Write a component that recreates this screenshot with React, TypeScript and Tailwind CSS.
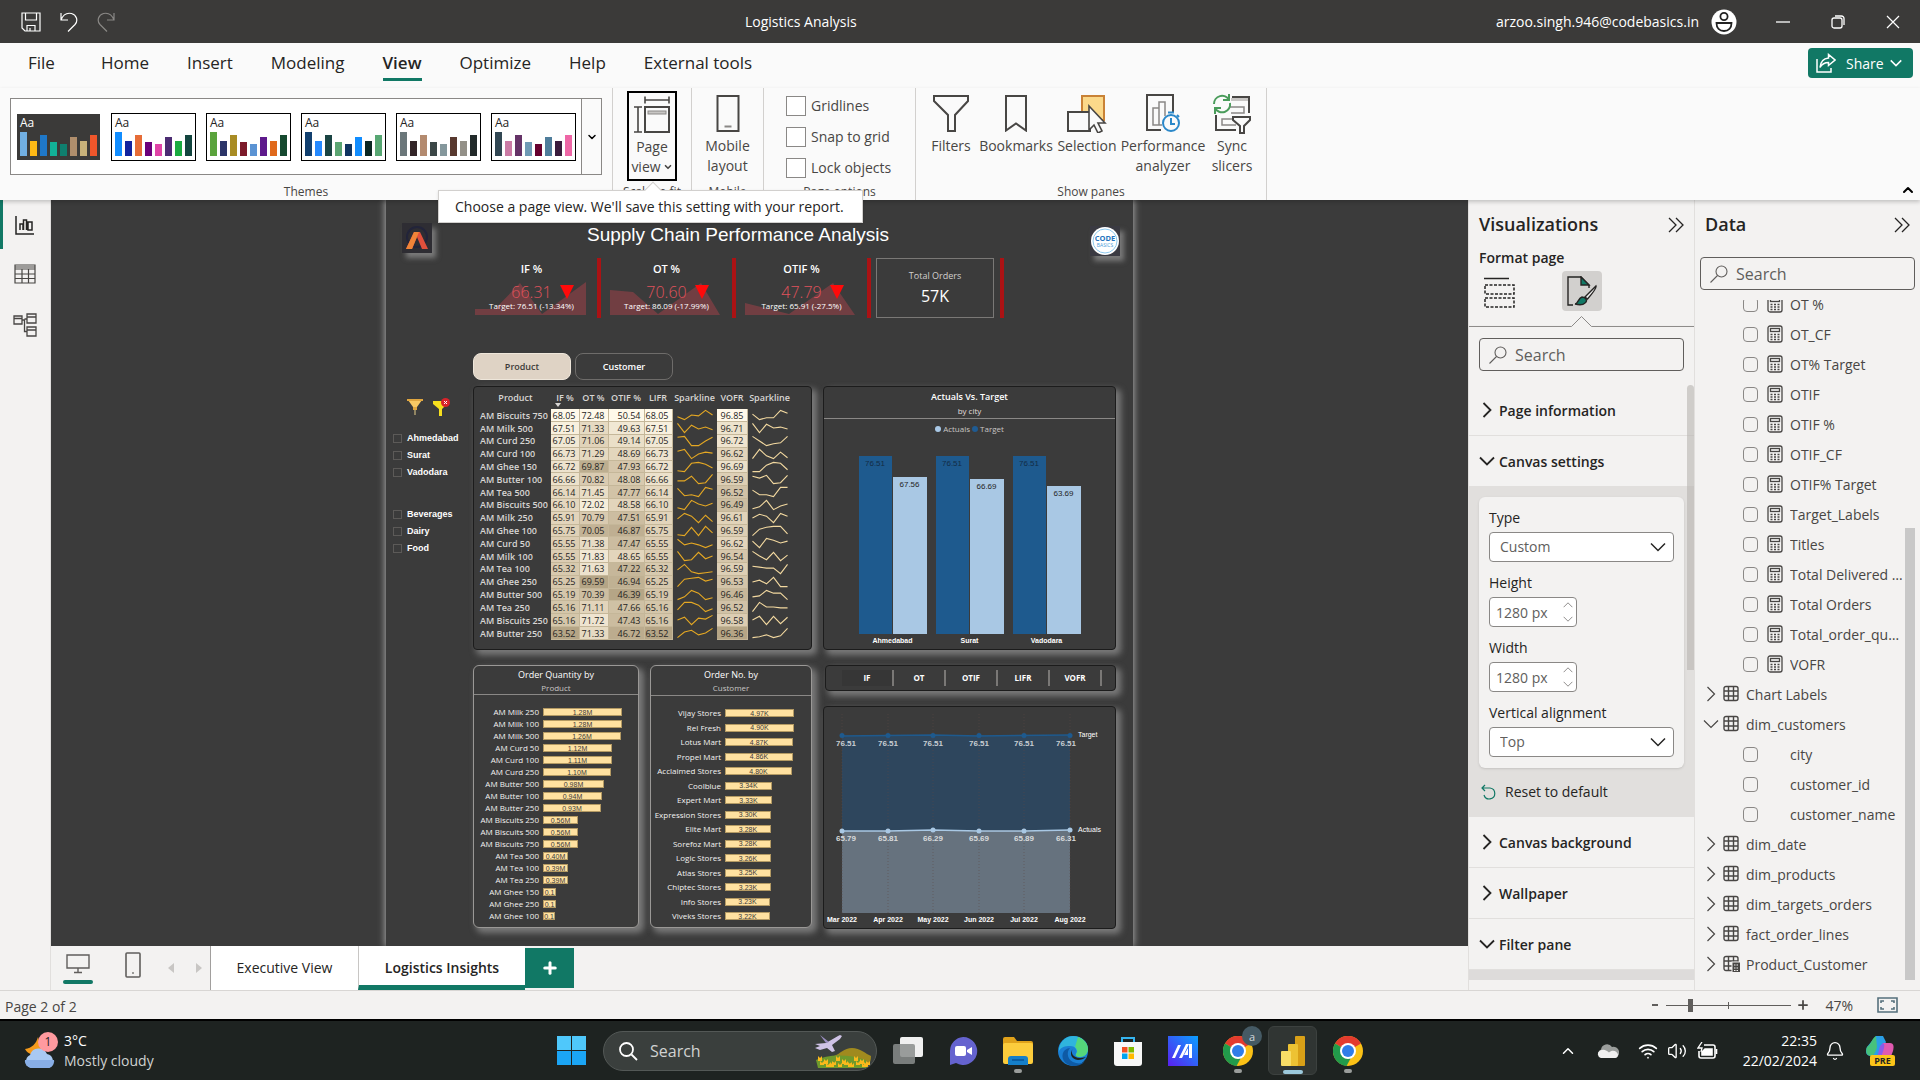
import React from "react";
import { ChevronDown, ChevronUp, Wifi, Volume2, Bell, Plus } from "lucide-react";

/* ---------- data ---------- */

const menuTabs = ["Home", "Insert", "Modeling", "View", "Optimize", "Help", "External tools"];

const themes: { dark?: boolean; colors: string[] }[] = [
  { dark: true, colors: ["#71afe2", "#ffb915", "#1f78c8", "#12b097", "#0f7f6f", "#b08e6c", "#c8b27a", "#f0562b"] },
  { colors: ["#118dff", "#12239e", "#e66c37", "#6b007b", "#e044a7", "#4b2c72", "#1aab40", "#13453f"] },
  { colors: ["#5aa33c", "#2b3468", "#a88c24", "#7c1a2a", "#5b93d3", "#5e1a8c", "#e0691c", "#15492f"] },
  { colors: ["#12406f", "#2489ff", "#1a4443", "#5aa572", "#0f3460", "#118dff", "#0a2622", "#57a773"] },
  { colors: ["#6b777a", "#332528", "#b38a6f", "#3c4747", "#84979c", "#58392f", "#939088", "#222a2a"] },
  { colors: ["#324753", "#cb7ba5", "#653367", "#6f9ab5", "#66002e", "#4f7d9b", "#3a1b3c", "#ee66a6"] },
];
const themeHeights = [24, 15, 21, 14, 12, 19, 15, 21];

type Row = [string, number, number, number, number, number, number[], number[]];
const products: Row[] = [
  ["AM Biscuits 750", 68.05, 72.48, 50.54, 68.05, 96.85, [3, 0, 5, 4, 10, 5], [6, 0, 2, 2, 10, 7]],
  ["AM Milk 500", 67.51, 71.33, 49.63, 67.51, 96.71, [10, 0, 8, 4, 6, 3], [10, 0, 9, 5, 6, 4]],
  ["AM Curd 250", 67.05, 71.06, 49.14, 67.05, 96.72, [9, 10, 0, 0, 5, 9], [10, 5, 0, 2, 3, 10]],
  ["AM Curd 100", 66.73, 71.29, 48.69, 66.73, 96.62, [8, 10, 0, 5, 7, 6], [0, 10, 3, 0, 7, 1]],
  ["AM Ghee 150", 66.72, 69.87, 47.93, 66.72, 96.69, [1, 0, 9, 10, 8, 4], [0, 0, 7, 10, 9, 2]],
  ["AM Butter 100", 66.66, 70.82, 48.08, 66.66, 96.59, [3, 3, 8, 0, 1, 10], [8, 6, 9, 0, 1, 9]],
  ["AM Tea 500", 66.14, 71.45, 47.77, 66.14, 96.52, [9, 1, 2, 0, 10, 8], [7, 2, 2, 0, 10, 10]],
  ["AM Biscuits 500", 66.1, 72.02, 48.58, 66.1, 96.49, [2, 0, 10, 6, 4, 7], [1, 3, 10, 0, 4, 6]],
  ["AM Milk 250", 65.91, 70.79, 47.51, 65.91, 96.61, [4, 10, 7, 0, 8, 1], [5, 9, 7, 0, 10, 7]],
  ["AM Ghee 100", 65.75, 70.05, 46.87, 65.75, 96.59, [1, 0, 9, 0, 10, 3], [0, 7, 9, 10, 10, 2]],
  ["AM Curd 50", 65.55, 71.38, 47.47, 65.55, 96.62, [9, 3, 5, 3, 0, 3], [7, 0, 10, 8, 5, 7]],
  ["AM Milk 100", 65.55, 71.83, 48.65, 65.55, 96.54, [10, 0, 1, 9, 2, 5], [10, 5, 1, 9, 0, 6]],
  ["AM Tea 100", 65.32, 71.63, 47.22, 65.32, 96.59, [4, 10, 2, 0, 1, 2], [8, 7, 6, 6, 0, 10]],
  ["AM Ghee 250", 65.25, 69.59, 46.94, 65.25, 96.53, [0, 8, 9, 10, 6, 8], [5, 7, 3, 10, 0, 0]],
  ["AM Butter 500", 65.19, 70.39, 46.39, 65.19, 96.46, [0, 3, 10, 7, 0, 2], [3, 4, 10, 7, 7, 0]],
  ["AM Tea 250", 65.16, 71.11, 47.66, 65.16, 96.52, [2, 10, 10, 7, 0, 3], [0, 10, 5, 5, 4, 4]],
  ["AM Biscuits 250", 65.16, 71.72, 47.43, 65.16, 96.58, [5, 8, 0, 7, 6, 10], [5, 9, 0, 9, 1, 8]],
  ["AM Butter 250", 63.52, 71.33, 46.72, 63.52, 96.36, [0, 6, 8, 3, 5, 10], [0, 1, 3, 0, 2, 10]],
];

const orderQty: [string, string, number][] = [
  ["AM Milk 250", "1.28M", 79],
  ["AM Milk 100", "1.28M", 79],
  ["AM Milk 500", "1.26M", 78],
  ["AM Curd 50", "1.12M", 69],
  ["AM Curd 100", "1.11M", 69],
  ["AM Curd 250", "1.10M", 68],
  ["AM Butter 500", "0.98M", 61],
  ["AM Butter 100", "0.94M", 59],
  ["AM Butter 250", "0.93M", 58],
  ["AM Biscuits 250", "0.56M", 35],
  ["AM Biscuits 500", "0.56M", 35],
  ["AM Biscuits 750", "0.56M", 35],
  ["AM Tea 500", "0.40M", 25],
  ["AM Tea 100", "0.39M", 25],
  ["AM Tea 250", "0.39M", 25],
  ["AM Ghee 150", "0.1", 13],
  ["AM Ghee 250", "0.1", 13],
  ["AM Ghee 100", "0.1", 12],
];

const orderNo: [string, string, number][] = [
  ["Vijay Stores", "4.97K", 69],
  ["Rel Fresh", "4.90K", 69],
  ["Lotus Mart", "4.87K", 68],
  ["Propel Mart", "4.86K", 68],
  ["Acclaimed Stores", "4.80K", 67],
  ["Coolblue", "3.34K", 47],
  ["Expert Mart", "3.33K", 47],
  ["Expression Stores", "3.30K", 46],
  ["Elite Mart", "3.28K", 46],
  ["Sorefoz Mart", "3.28K", 46],
  ["Logic Stores", "3.26K", 46],
  ["Atlas Stores", "3.25K", 46],
  ["Chiptec Stores", "3.23K", 46],
  ["Info Stores", "3.23K", 45],
  ["Viveks Stores", "3.22K", 45],
];

const measures = [
  "OT %",
  "OT_CF",
  "OT% Target",
  "OTIF",
  "OTIF %",
  "OTIF_CF",
  "OTIF% Target",
  "Target_Labels",
  "Titles",
  "Total Delivered Orders",
  "Total Orders",
  "Total_order_quantity",
  "VOFR",
];

/* ---------- helpers ---------- */

const mix = (a: number[], b: number[], t: number) =>
  `rgb(${a.map((v, i) => Math.round(v + (b[i] - v) * t)).join(",")})`;

function heat(v: number, min: number, max: number) {
  const low = [181, 165, 134];
  const mid = [224, 210, 184];
  const high = [255, 249, 234];
  const t = (v - min) / (max - min);
  return t < 0.5 ? mix(low, mid, t * 2) : mix(mid, high, (t - 0.5) * 2);
}

function Spark({ data, color }: { data: number[]; color: string }) {
  const pts = data.map((v, i) => `${1 + i * 7.6},${11.5 - v}`).join(" ");
  return (
    <svg viewBox="0 0 40 13" className="block h-3 w-10 overflow-visible">
      <polyline points={pts} fill="none" stroke={color} strokeWidth="1.2" />
    </svg>
  );
}

function Chevron({ dir, className, width = 1.5 }: { dir: "down" | "right" | "up"; className: string; width?: number }) {
  const d = { down: "M1 4.500l7 7 7-7", up: "M1 11.500l7-7 7 7", right: "M4.500 1l7 7-7 7" }[dir];
  return (
    <svg viewBox="0 0 16 16" className={`shrink-0 ${className}`} fill="none" stroke="currentColor" strokeWidth={width}>
      <path d={d} />
    </svg>
  );
}

/* ---------- ribbon ---------- */

function TitleBar() {
  return (
    <header className="flex h-[43px] shrink-0 items-center bg-[#3b3a39] text-white">
      <div className="flex w-1/3 items-center gap-[19px] pl-[21px]">
        <button aria-label="Save">
          <svg viewBox="0 0 20 20" className="size-5" fill="none" stroke="#fff" strokeWidth="1.2">
            <path d="M1 1h18v18H4l-3-3zM4.500 1v7h11V1M6 19v-5.500h8V19M9 16v3" />
          </svg>
        </button>
        <button aria-label="Undo">
          <svg viewBox="0 0 18 20" className="h-5 w-[18px]" fill="none" stroke="#fff" strokeWidth="1.2">
            <path d="M1 1v7h7M1 8c2-5 6-7.500 10.500-6.500 5 1.500 7 7 3.500 11L8 19.500" />
          </svg>
        </button>
        <button aria-label="Redo">
          <svg viewBox="0 0 18 20" className="h-5 w-[18px]" fill="none" stroke="#8a8886" strokeWidth="1.2">
            <path d="M17 1v7h-7M17 8c-2-5-6-7.500-10.500-6.500-5 1.500-7 7-3.500 11l7 7" />
          </svg>
        </button>
      </div>
      <div className="flex-1 pl-[105px] text-[14px]">Logistics Analysis</div>
      <div className="flex items-center text-[14px]">
        <span>arzoo.singh.946@codebasics.in</span>
        <svg viewBox="0 0 26 26" className="ml-3 size-[26px]">
          <circle cx="13" cy="13" r="12.500" fill="#fff" />
          <circle cx="13" cy="7.500" r="3.600" fill="none" stroke="#222" strokeWidth="1.800" />
          <path d="M5.500 14h15c0 5-3 8-7.500 8s-7.500-3-7.500-8z" fill="none" stroke="#222" strokeWidth="1.800" />
        </svg>
        <button aria-label="Minimize" className="flex h-10 w-[75px] items-center justify-center pl-4">
          <svg viewBox="0 0 14 14" className="size-3.5" stroke="#fff" strokeWidth="1.300"><path d="M0 7h14" /></svg>
        </button>
        <button aria-label="Restore" className="flex h-10 w-[51px] items-center justify-center">
          <svg viewBox="0 0 14 14" className="size-3.5" fill="none" stroke="#fff" strokeWidth="1.300">
            <rect x="1" y="3" width="10" height="10" rx="2" />
            <path d="M4 1h6.500a2.500 2.500 0 0 1 2.500 2.500V10" />
          </svg>
        </button>
        <button aria-label="Close" className="mr-5 flex h-10 w-[37px] items-center justify-end">
          <svg viewBox="0 0 14 14" className="size-3.5" stroke="#fff" strokeWidth="1.200"><path d="M1 1l12 12M13 1L1 13" /></svg>
        </button>
      </div>
    </header>
  );
}

function MenuBar() {
  return (
    <nav className="flex h-[45px] shrink-0 items-start bg-[#fafafa] pr-[7px] text-[17px] text-[#252423]">
      <button className="mt-[5px] ml-7 h-[30px]">File</button>
      <div className="ml-[46px] flex gap-[38px]">
        {menuTabs.map((t) => (
          <button
            key={t}
            className={
              t === "View"
                ? "mt-[5px] h-[33px] border-b-3 border-[#117865] leading-[30px] font-semibold"
                : "mt-[5px] h-[33px] border-b-3 border-transparent leading-[30px]"
            }
          >
            {t}
          </button>
        ))}
      </div>
      <button className="mt-[5px] ml-auto flex h-[30px] w-[105px] items-center rounded bg-[#117865] pl-2 text-[14px] text-white">
        <svg viewBox="0 0 20 20" className="mr-2.5 size-5" fill="none" stroke="#fff" strokeWidth="1.500">
          <path d="M1 6v13h14v-4" />
          <path d="M12.500 5V1.500L19 7l-6.500 5.500V9.500C9 9.500 6 11 4 14.500 4.500 9 7.500 5.500 12.500 5z" />
        </svg>
        Share
        <Chevron dir="down" className="ml-1.5 size-3" width={2} />
      </button>
    </nav>
  );
}

function Group({ label, className, children }: { label: string; className: string; children: React.ReactNode }) {
  return (
    <section className={`relative flex flex-col border-r border-[#d2d0ce] ${className}`}>
      <div className="flex h-[92px]">{children}</div>
      <h2 className="mt-[3px] text-center text-[12px] leading-[17px] text-[#484644]">{label}</h2>
    </section>
  );
}

function RibbonButton({ icon, lines, className }: { icon: React.ReactNode; lines: string[]; className: string }) {
  return (
    <button className={`flex flex-col items-center pt-[7px] text-[14px] leading-[20px] text-[#484644] ${className}`}>
      <span className="mb-1 flex h-[37px] items-center">{icon}</span>
      {lines.map((l) => (
        <span key={l} className="whitespace-nowrap">{l}</span>
      ))}
    </button>
  );
}

function Ribbon() {
  const ic = { fill: "none", stroke: "#484644", strokeWidth: 2 };
  return (
    <div className="relative z-20 flex h-28 shrink-0 bg-[#fafafa] shadow-[0_2px_4px_rgba(0,0,0,0.2)]">
      <Group label="Themes" className="w-[613px]">
        <div className="mt-2.5 ml-2.5 flex h-[77px] w-[592px] border border-[#8a8886] bg-white">
          <div className="flex flex-1 items-center gap-2.5 pl-[5px]">
            {themes.map((t, i) => (
              <button
                key={i}
                aria-label={`Theme ${i + 1}`}
                className={
                  t.dark
                    ? "flex h-[48px] w-[85px] flex-col items-start border border-white bg-[#3b3a39] px-[3px] text-white"
                    : "flex h-[48px] w-[85px] flex-col items-start border border-black bg-white px-[3px] text-[#252423]"
                }
              >
                <span className="h-[18px] text-[12px] leading-[18px]">Aa</span>
                <span className="flex h-[24px] w-full items-end gap-[3px]">
                  {t.colors.map((c, j) => (
                    <span key={j} className="w-[7px]" style={{ background: c, height: themeHeights[j] }} />
                  ))}
                </span>
              </button>
            ))}
          </div>
          <button aria-label="More themes" className="flex w-5 items-center justify-center border-l border-[#8a8886] bg-[#fafafa]">
            <ChevronDown className="size-3" strokeWidth={3} />
          </button>
        </div>
      </Group>
      <Group label="Scale to fit" className="w-[79px]">
        <button className="mt-[3px] ml-[14px] flex h-[90px] w-[50px] flex-col items-center border-2 border-black pt-0.5 text-[14px] leading-[20px] text-[#484644]">
          <svg viewBox="0 0 36 38" className="mb-1 h-[38px] w-9" {...ic}>
            <rect x="11" y="12" width="24" height="25" />
            <rect x="14" y="16" width="18" height="3" fill="#c8c6c4" stroke="#8a8886" strokeWidth="1" />
            <path d="M11 1.500v7M35 1.500v7M11 5h24M0 12h8M0 37h8M4 12v25" strokeWidth="1.600" />
          </svg>
          <span>Page</span>
          <span className="flex items-center gap-0.5">view<ChevronDown className="size-2.5" strokeWidth={4} /></span>
        </button>
      </Group>
      <Group label="Mobile" className="w-[72px]">
        <RibbonButton
          className="w-full"
          lines={["Mobile", "layout"]}
          icon={
            <svg viewBox="0 0 24 37" className="h-[37px] w-6" {...ic}>
              <rect x="1.500" y="1" width="21" height="35" />
              <path d="M8.500 31.500h7" stroke="#8a8886" />
            </svg>
          }
        />
      </Group>
      <Group label="Page options" className="w-[152px]">
        <div className="flex flex-col gap-[10px] pt-[7px] pl-[22px]">
          {["Gridlines", "Snap to grid", "Lock objects"].map((l) => (
            <label key={l} className="flex h-[21px] items-center gap-[5px] text-[14px] text-[#484644]">
              <input type="checkbox" className="h-5 w-5 appearance-none border border-[#8a8886] bg-white" />
              {l}
            </label>
          ))}
        </div>
      </Group>
      <Group label="Show panes" className="w-[351px]">
        <RibbonButton
          className="ml-1.5 w-[58px]"
          lines={["Filters"]}
          icon={
            <svg viewBox="0 0 36 37" className="h-[37px] w-9" {...ic}>
              <path d="M1 1h34v5L22 20v16h-7V20L1 6z" />
            </svg>
          }
        />
        <RibbonButton
          className="w-[72px]"
          lines={["Bookmarks"]}
          icon={
            <svg viewBox="0 0 22 37" className="h-[37px] w-[22px]" {...ic}>
              <path d="M1 1h20v34.500l-10-7-10 7z" />
            </svg>
          }
        />
        <RibbonButton
          className="w-[70px]"
          lines={["Selection"]}
          icon={
            <svg viewBox="0 0 40 38" className="h-[38px] w-10" {...ic}>
              <rect x="15" y="1" width="22" height="24" fill="#fbd98a" stroke="#c98236" />
              <rect x="1" y="17" width="22" height="19" fill="#fafafa" />
              <path d="M22 11v24l5-5 4 8 4-2-4-8h7z" fill="#fafafa" strokeWidth="1.600" />
            </svg>
          }
        />
        <RibbonButton
          className="w-[82px]"
          lines={["Performance", "analyzer"]}
          icon={
            <svg viewBox="0 0 36 39" className="h-[39px] w-9" {...ic}>
              <path d="M16 36H2V1h26v17" />
              <path d="M8 14h6v17H8zM14 14V8h6v14M14 31h3" stroke="#8a8886" strokeWidth="1.500" />
              <circle cx="26" cy="29" r="8" fill="#fafafa" stroke="#2b88c9" />
              <path d="M26 24v6h4M23 18.500h6M32 21l2 2" stroke="#2b88c9" />
            </svg>
          }
        />
        <RibbonButton
          className="w-[56px]"
          lines={["Sync", "slicers"]}
          icon={
            <svg viewBox="0 0 40 40" className="size-10" {...ic}>
              <path d="M20 3h17v16M4 21v15h20" />
              <path d="M19 5.500h17" stroke="#c8c6c4" strokeWidth="3" />
              <path d="M18 13h14v6H19M24 31H10v-6h10" stroke="#8a8886" strokeWidth="1.500" />
              <path d="M2 10a8 8 0 0 1 15-4M18 9a8 8 0 0 1-15 5M17 0v6h-6M3 20v-6h6" stroke="#4a9c5b" />
              <path d="M21 23h17v3l-6 6v7h-4v-7l-7-6z" fill="#fafafa" />
            </svg>
          }
        />
      </Group>
      <button aria-label="Collapse ribbon" className="mt-auto mr-1 mb-0.5 ml-auto">
        <ChevronUp className="size-4" strokeWidth={3} />
      </button>
      <div role="tooltip" className="absolute top-[102px] left-[438px] border border-[#d2d0ce] bg-white pt-[5px] pr-[18px] pb-1 pl-4 text-[14px] leading-[22px] whitespace-nowrap text-[#252423] shadow">
        <span className="absolute -top-[7px] left-[208px] size-3 rotate-45 border-t border-l border-[#d2d0ce] bg-white" />
        Choose a page view. We'll save this setting with your report.
      </div>
    </div>
  );
}

/* ---------- report ---------- */

const panelGlow = "shadow-[4px_4px_6px_1px_#7a7a7a]";

function Kpi({ name, value, target, area }: { name: string; value: string; target: string; area: string }) {
  return (
    <>
      <div className="relative flex w-[131px] flex-col items-center text-white">
        <svg viewBox="0 0 111 33" className="absolute bottom-[3px] left-[9px] h-[33px] w-[111px]">
          <polygon points={area} fill="#d64550" fillOpacity="0.35" />
        </svg>
        <h3 className="relative pt-[2px] text-[11px] leading-[18px] font-semibold">{name}</h3>
        <div className="relative flex items-center text-[16px] leading-[28px] font-light text-[#e0525c]">
          <span className="w-[14px]" />
          <span className="px-2">{value}</span>
          <svg viewBox="0 0 14 14" className="size-[14px]"><path d="M0 0h14L7 14z" fill="#ff0a0a" /></svg>
        </div>
        <p className="relative -mt-1.5 text-[8px] leading-[12px] whitespace-nowrap">{target}</p>
      </div>
      <span className="w-1 bg-[#ab1214]" />
    </>
  );
}

function ProductTable() {
  const col = (i: number) => products.map((p) => p[i] as number);
  const range = [1, 2, 3, 4, 5].map((i) => [Math.min(...col(i)), Math.max(...col(i))]);
  const cell = (p: Row, i: number) => (
    <td
      className="border-r border-b border-[#c5b799] pr-[3px] text-right text-[9px] leading-[11px] text-[#252423]"
      style={{ background: heat(p[i] as number, range[i - 1][0], range[i - 1][1]) }}
    >
      {(p[i] as number).toFixed(2)}
    </td>
  );
  return (
    <section className={`h-[264px] rounded border border-[#1c1c1c] bg-[#3b3b3b] pt-1 pl-1.5 ${panelGlow}`}>
      <table className="h-[249px] w-[312px] table-fixed border-collapse text-[#d8d6d4]">
        <colgroup>
          <col className="w-[71px]" />
          <col className="w-[28px]" />
          <col className="w-[29px]" />
          <col className="w-[36px]" />
          <col className="w-[28px]" />
          <col className="w-[45px]" />
          <col className="w-[30px]" />
          <col className="w-[45px]" />
        </colgroup>
        <thead>
          <tr className="h-[18px] text-[9px] whitespace-nowrap">
            {["Product", "IF %", "OT %", "OTIF %", "LIFR", "Sparkline", "VOFR", "Sparkline"].map((h, i) => (
              <th key={i} className="relative p-0 text-center align-top leading-[13px] font-semibold">
                {h}
                {i === 1 && (
                  <svg viewBox="0 0 6 4" className="absolute bottom-0.5 left-1 h-1 w-1.5"><path d="M0 0h6L3 4z" fill="#d8d6d4" /></svg>
                )}
              </th>
            ))}
          </tr>
        </thead>
        <tbody>
          {products.map((p) => (
            <tr key={p[0]}>
              <td className="p-0 text-[9px] leading-[11px] font-semibold whitespace-nowrap">{p[0]}</td>
              {cell(p, 1)}
              {cell(p, 2)}
              {cell(p, 3)}
              {cell(p, 4)}
              <td className="p-0 pl-0.5"><Spark data={p[6]} color="#e5a823" /></td>
              {cell(p, 5)}
              <td className="p-0 pl-0.5"><Spark data={p[7]} color="#f3d9a0" /></td>
            </tr>
          ))}
        </tbody>
      </table>
    </section>
  );
}

function ColumnChart() {
  const cities: [string, number, number][] = [
    ["Ahmedabad", 67.56, 157],
    ["Surat", 66.69, 155],
    ["Vadodara", 63.69, 148],
  ];
  return (
    <section className={`flex h-[264px] flex-col rounded border border-[#1c1c1c] bg-[#3b3b3b] text-center ${panelGlow}`}>
      <h3 className="pt-[2px] text-[9px] leading-[15px] font-semibold text-white">Actuals Vs. Target</h3>
      <p className="h-[15px] border-b border-[#8a8886] text-[8px] leading-[13px] text-[#e1dfdd]">by city</p>
      <div className="flex items-center justify-center gap-0.5 pt-[3px] text-[8px] leading-[14px] text-[#c8c6c4]">
        <span className="size-1.5 rounded-full bg-[#a9c8e6]" />Actuals
        <span className="size-1.5 rounded-full bg-[#1f5b92]" />Target
      </div>
      <div className="mt-auto flex justify-center gap-[9px] pb-0.5">
        {cities.map(([c, v, h]) => (
          <div key={c}>
            <div className="flex items-end gap-px font-['Liberation_Sans',sans-serif] text-[8px] leading-[15px]">
              <div className="h-[178px] w-[33px] bg-[#1e5a8e] text-[#132c45]">76.51</div>
              <div className="w-[34px] bg-[#a9c8e4] text-[#252423]" style={{ height: h }}>{v}</div>
            </div>
            <div className="font-['Liberation_Sans',sans-serif] text-[7px] leading-[13px] font-bold text-white">{c}</div>
          </div>
        ))}
      </div>
    </section>
  );
}

function BarPanel({
  title,
  sub,
  rows,
  labelClass,
  className,
}: {
  title: string;
  sub: string;
  rows: [string, string, number][];
  labelClass: string;
  className: string;
}) {
  return (
    <section className={`flex h-[263px] flex-col rounded-md border border-[#9a9896] bg-[#3b3b3b] ${panelGlow} ${className}`}>
      <h3 className="pt-[2px] text-center text-[9px] leading-[14px] font-medium text-white">{title}</h3>
      <p className="h-[14px] border-b border-[#8a8886] text-center text-[8px] leading-[11px] text-[#c8c6c4]">{sub}</p>
      <ul className="mt-[11px] mb-[5px] flex flex-1 flex-col justify-between">
        {rows.map(([n, v, w], i) => (
          <li key={i} className="flex h-3 items-center gap-1 text-[8px] leading-[10px] text-[#f3f2f1]">
            <span className={`shrink-0 text-right whitespace-nowrap ${labelClass}`}>{n}</span>
            <span
              className="flex h-2 items-center justify-center border border-[#b49a63] bg-[#ffe1a0] font-['Liberation_Sans',sans-serif] text-[7px] leading-[7px] text-[#3b3a39]"
              style={{ width: w }}
            >
              {v}
            </span>
          </li>
        ))}
      </ul>
    </section>
  );
}

function TrendChart() {
  const xs = [18, 64, 109, 155, 200, 246];
  const months = ["Mar 2022", "Apr 2022", "May 2022", "Jun 2022", "Jul 2022", "Aug 2022"];
  const actual = ["65.79", "65.81", "66.29", "65.69", "65.89", "66.31"];
  const ys = [124, 124, 123, 124, 124, 123];
  return (
    <section className={`h-[223px] rounded border border-[#1c1c1c] bg-[#3b3b3b] ${panelGlow}`}>
      <svg viewBox="0 0 291 221" className="block w-full font-['Liberation_Sans',sans-serif]">
        <polygon points="18,29 246,28 246,123 18,124" fill="#2e465d" />
        <polygon points="18,124 64,124 109,123 155,124 200,124 246,123 246,206 18,206" fill="#66727e" />
        {xs.map((x) => (
          <path key={x} d={`M${x} 7v199`} stroke="#5c4a46" strokeWidth="0.500" strokeDasharray="1 2" />
        ))}
        <path d="M18 29L109 28L155 29L246 28" stroke="#1e5a8e" strokeWidth="1.500" fill="none" />
        <polyline points={xs.map((x, i) => `${x},${ys[i]}`).join(" ")} stroke="#a9c8e4" strokeWidth="1.500" fill="none" />
        {xs.map((x, i) => (
          <g key={x} textAnchor="middle">
            <circle cx={x} cy={28.5} r="2.500" fill="#1e5a8e" />
            <circle cx={x} cy={ys[i]} r="2.500" fill="#a9c8e4" />
            <text x={i === 0 ? x + 4 : i === 5 ? x - 4 : x} y="39" fontSize="8" fontWeight="700" fill="#c8cdd2">76.51</text>
            <text x={i === 0 ? x + 4 : i === 5 ? x - 4 : x} y="134" fontSize="8" fontWeight="700" fill="#d8dadc">{actual[i]}</text>
            <text x={x} y="215" fontSize="7" fontWeight="700" fill="#fff">{months[i]}</text>
          </g>
        ))}
        <text x="254" y="30" fontSize="7" fill="#fff">Target</text>
        <text x="254" y="125" fontSize="7" fill="#fff">Actuals</text>
      </svg>
    </section>
  );
}

function Slicer({ items, className }: { items: string[]; className: string }) {
  return (
    <div className={`flex flex-col ${className}`}>
      {items.map((i) => (
        <label key={i} className="flex h-[17px] items-center gap-[5px] font-['Liberation_Sans',sans-serif] text-[9px] font-bold text-white">
          <input type="checkbox" className="size-[9px] appearance-none border border-[#5c5a58]" />
          {i}
        </label>
      ))}
    </div>
  );
}

function Report() {
  return (
    <main className="flex min-h-0 flex-1 justify-center overflow-hidden bg-[#3b3b3b]">
      <article className="h-full w-[747px] shrink-0 bg-[#3b3b3b] shadow-[0_0_7px_1px_#a5a5a5]">
        <div className="flex h-[58px] items-start justify-between px-4">
          <svg viewBox="0 0 30 30" className="mt-[23px] size-[30px] shadow-[4px_5px_5px_#7a7a7a]">
            <rect width="30" height="30" fill="#2e2d33" />
            <circle cx="15" cy="14" r="10" fill="none" stroke="#22243a" strokeWidth="2" />
            <path d="M4 26L12 9h6l8 17h-6l-5-12-5 12z" fill="#e0503c" />
            <path d="M4 26L12 9h5L10 26z" fill="#f08438" />
          </svg>
          <h1 className="mt-[21px] ml-[-46px] font-['Liberation_Sans',sans-serif] text-[19px] leading-7 text-white">Supply Chain Performance Analysis</h1>
          <svg viewBox="0 0 30 30" className="mt-[26px] -mr-[3px] size-[30px] shadow-[4px_5px_5px_#7a7a7a]">
            <rect width="30" height="30" fill="#3a3a42" />
            <circle cx="15" cy="15" r="14" fill="#fff" />
            <circle cx="15" cy="15" r="12" fill="none" stroke="#8ec9ee" strokeWidth="1" />
            <text x="15" y="15" textAnchor="middle" fontSize="7.500" fontWeight="700" fill="#2474c0" fontFamily="Open Sans">CODE</text>
            <text x="15" y="21" textAnchor="middle" fontSize="5" fill="#4a9bd8" fontFamily="Open Sans">BASICS</text>
          </svg>
        </div>

        <div className="flex h-[60px] pl-20">
          <Kpi name="IF %" value="66.31" target="Target: 76.51 (-13.34%)" area="0,27 20,27 45,1 67,32 111,0 111,33 0,33" />
          <Kpi name="OT %" value="70.60" target="Target: 86.09 (-17.99%)" area="0,8 23,10 48,32 91,1 110,33 0,33" />
          <Kpi name="OTIF %" value="47.79" target="Target: 65.91 (-27.5%)" area="0,21 44,32 88,1 110,33 0,33" />
          <div className="ml-[5px] w-[118px] border border-[#7a7876] pt-[9px] text-center text-white">
            <p className="text-[9px] leading-[16px] text-[#d2d0ce]">Total Orders</p>
            <p className="text-[16px] leading-6 font-medium">57K</p>
          </div>
          <span className="ml-[6px] w-1 bg-[#ab1214]" />
        </div>

        <div className="flex gap-1 pt-[35px] pl-[87px] text-[9px] font-semibold">
          <button className="h-[27px] w-[98px] rounded-lg border border-[#eee6da] bg-[#dfd3c5] text-[#3b3a39]">Product</button>
          <button className="h-[27px] w-[98px] rounded-lg border border-[#6e6c6a] text-white">Customer</button>
        </div>

        <div className="flex pt-[6px] pr-[17px]">
          <aside className="w-[87px] shrink-0 pl-[7px]">
            <div className="flex gap-2.5 pt-3 pl-[14px]">
              <svg viewBox="0 0 16 18" className="h-[18px] w-4">
                <path d="M1 2h14l-5 7H6z" fill="#f9c964" />
                <path d="M0 1h16v2H0zM6 9h4v3H6z" fill="#e0a640" />
                <path d="M8 12v5" stroke="#e8d08a" />
              </svg>
              <svg viewBox="0 0 18 18" className="size-[18px]">
                <path d="M0 3h14v3l-5 5v7H6v-7L0 6z" fill="#f6df1e" />
                <circle cx="12.500" cy="4.500" r="4.500" fill="#d8232a" />
                <path d="M11 3l3 3M14 3l-3 3" stroke="#fff" />
              </svg>
            </div>
            <Slicer items={["Ahmedabad", "Surat", "Vadodara"]} className="pt-[14px]" />
            <Slicer items={["Beverages", "Dairy", "Food"]} className="pt-[25px]" />
          </aside>
          <div className="flex w-[339px] flex-col gap-[15px]">
            <ProductTable />
            <div className="flex gap-[11px]">
              <BarPanel title="Order Quantity by" sub="Product" rows={orderQty} labelClass="w-[65px]" className="w-[166px]" />
              <BarPanel title="Order No. by" sub="Customer" rows={orderNo} labelClass="w-[70px]" className="w-[162px]" />
            </div>
          </div>
          <div className="ml-[11px] flex flex-1 flex-col gap-[15px]">
            <ColumnChart />
            <div className={`ml-0.5 flex h-[26px] items-center rounded border border-[#1c1c1c] bg-[#3b3b3b] pl-4 text-[8px] font-bold text-white ${panelGlow}`}>
              {["IF", "OT", "OTIF", "LIFR", "VOFR"].map((t) => (
                <button key={t} className={t === "IF" ? "h-4 w-[52px] border-r-2 border-[#7a7876] bg-[#363636]" : "h-4 w-[52px] border-r-2 border-[#7a7876]"}>
                  {t}
                </button>
              ))}
            </div>
            <TrendChart />
          </div>
        </div>
      </article>
    </main>
  );
}

function LeftRail() {
  const s = { fill: "none", stroke: "#484644", strokeWidth: 1.5 };
  return (
    <nav className="flex w-[51px] shrink-0 flex-col border-r border-[#e1dfdd] bg-[#f3f2f1]">
      <button aria-label="Report view" className="flex h-[49px] items-center justify-center border-l-3 border-[#117865] pr-[3px]">
        <svg viewBox="0 0 20 20" className="size-5" {...s} stroke="#252423">
          <path d="M1 1v18h18M5 15V9h3v6M8.500 15V5h3v10M13 15V7h4v8z" />
        </svg>
      </button>
      <button aria-label="Table view" className="flex h-[50px] items-center justify-center">
        <svg viewBox="0 0 22 20" className="h-5 w-[22px]" {...s} strokeWidth="1.200">
          <path d="M1 1h20v18H1zM1 5h20M1 10h20M1 14.500h20M8 5v14M14.500 5v14M1 3h20" />
        </svg>
      </button>
      <button aria-label="Model view" className="flex h-[51px] items-center justify-center">
        <svg viewBox="0 0 24 24" className="size-6" {...s} strokeWidth="1.300">
          <path d="M1 3h8v8H1zM1 5.500h8M14 1h9v9h-9zM14 4h9M14 14h9v9h-9zM14 17h9M9 7h2.500v11.500H14M11.500 6H14" />
        </svg>
      </button>
    </nav>
  );
}

function PageTabs() {
  return (
    <div className="flex h-11 shrink-0 bg-[#f3f2f1] text-[14px] text-[#252423]">
      <button aria-label="Desktop layout" className="ml-3 flex w-[30px] flex-col items-center pt-2">
        <svg viewBox="0 0 24 20" className="h-5 w-6" fill="none" stroke="#605e5c" strokeWidth="1.400">
          <path d="M1 1h22v13H1zM12 14v4M8 18.500h8" />
        </svg>
        <span className="mt-1.5 h-1 w-full rounded-sm bg-[#117865]" />
      </button>
      <button aria-label="Mobile layout" className="ml-8 self-start pt-1.5">
        <svg viewBox="0 0 16 26" className="h-[26px] w-4" fill="none" stroke="#605e5c" strokeWidth="1.600">
          <rect x="1" y="1" width="14" height="24" rx="1" />
          <path d="M7.200 21h1.600" />
        </svg>
      </button>
      <div className="ml-[27px] flex items-center gap-[22px]">
        <button aria-label="Previous page"><svg viewBox="0 0 6 10" className="h-2.5 w-1.5"><path d="M6 0v10L0 5z" fill="#c8c6c4" /></svg></button>
        <button aria-label="Next page"><svg viewBox="0 0 6 10" className="h-2.5 w-1.5"><path d="M0 0v10l6-5z" fill="#c8c6c4" /></svg></button>
      </div>
      <button className="ml-2 w-[148px] border-l border-[#a19f9d] bg-white pb-0.5">Executive View</button>
      <button className="w-[167px] border-b-5 border-l border-b-[#117865] border-l-[#c8c6c4] bg-white pt-[3px] font-semibold">Logistics Insights</button>
      <button aria-label="New page" className="mt-0.5 flex h-10 w-[49px] items-center justify-center bg-[#117865] text-white">
        <Plus className="size-[18px]" strokeWidth={4} />
      </button>
    </div>
  );
}

/* ---------- side panes ---------- */

function SearchIcon() {
  return (
    <svg viewBox="0 0 18 18" className="size-[18px] shrink-0" fill="none" stroke="#605e5c" strokeWidth="1.100">
      <circle cx="11.500" cy="6.500" r="5.500" />
      <path d="M7.500 10.500L0.500 17.500" />
    </svg>
  );
}

function SearchBox({ label, className }: { label: string; className: string }) {
  return (
    <label className={`flex h-[33px] items-center gap-2 rounded-sm border border-[#605e5c] px-[9px] ${className}`}>
      <SearchIcon />
      <input aria-label={label} placeholder="Search" className="w-full min-w-0 bg-transparent text-[16px] outline-none placeholder:text-[#605e5c]" />
    </label>
  );
}

function PaneHeader({ title }: { title: string }) {
  return (
    <div className="flex h-12 shrink-0 items-center justify-between pt-px pr-2.5 pl-2.5">
      <h2 className="text-[18px] font-semibold text-[#252423]">{title}</h2>
      <button aria-label={`Collapse ${title}`}>
        <svg viewBox="0 0 16 16" className="size-4" fill="none" stroke="#252423" strokeWidth="1.300">
          <path d="M1 1l7 7-7 7M8 1l7 7-7 7" />
        </svg>
      </button>
    </div>
  );
}

function Section({ title, open }: { title: string; open?: boolean }) {
  return (
    <button className="flex h-[51px] w-full shrink-0 items-center gap-1 border-b border-[#e1dfdd] bg-[#f3f2f1] pl-2.5 text-[14px] font-semibold text-[#252423]">
      <Chevron dir={open ? "down" : "right"} className="size-4" width={1.8} />
      {title}
    </button>
  );
}

function SelectField({ label, value }: { label: string; value: string }) {
  return (
    <label className="relative mb-2.5 block text-[14px] leading-[21px] text-[#252423]">
      {label}
      <select defaultValue={value} className="mt-1 block h-[30px] w-full appearance-none rounded-sm border border-[#8a8886] bg-white px-2.5 leading-[20px] text-[#605e5c]">
        <option>{value}</option>
      </select>
      <Chevron dir="down" className="pointer-events-none absolute right-2 bottom-[7px] size-4" />
    </label>
  );
}

function NumberField({ label }: { label: string }) {
  return (
    <label className="mb-2.5 block text-[14px] leading-[21px] text-[#252423]">
      {label}
      <span className="mt-1 flex h-[30px] w-[88px] items-center rounded-sm border border-[#8a8886] bg-white pl-1.5">
        <input defaultValue="1280 px" className="w-[67px] text-[#605e5c] outline-none" />
        <span className="flex flex-col gap-1 pr-[3px] text-[#8a8886]">
          <Chevron dir="up" className="size-2.5" />
          <Chevron dir="down" className="size-2.5" />
        </span>
      </span>
    </label>
  );
}

function VisualizationsPane() {
  return (
    <aside className="flex w-[227px] shrink-0 flex-col overflow-hidden border-r border-l border-[#e1dfdd] bg-[#f3f2f1]">
      <PaneHeader title="Visualizations" />
      <h3 className="pl-2.5 text-[14px] leading-[20px] font-semibold text-[#252423]">Format page</h3>
      <div className="flex pt-[3px] pl-[15px]">
        <button aria-label="Build visual" className="mt-1 h-9 w-[31px]">
          <svg viewBox="0 0 31 32" className="h-8 w-[31px]" fill="none" stroke="#252423" strokeWidth="1.500">
            <path d="M0 1.500h25" />
            <path d="M1 8h29v9H1zM1 21h29v9H1z" strokeDasharray="3 1.500" />
          </svg>
        </button>
        <button aria-label="Format page" className="ml-[47px] flex size-10 items-center justify-center rounded-sm bg-[#d2d0ce]">
          <svg viewBox="0 0 30 30" className="size-[30px]" fill="none" stroke="#252423" strokeWidth="1.400">
            <path d="M6 29H1V1h13l8 8v3" />
            <path d="M14 1l8 8h-8z" fill="#117865" />
            <path d="M18 21L29 10c1 2-5 9-8.500 13z" fill="#f3f2f1" />
            <path d="M8 28c3 0 3-6 7-7 4 0 6 4 3 6-2 2-6 2-10 1z" fill="#117865" />
          </svg>
        </button>
      </div>
      <svg viewBox="0 0 226 12" className="mt-1 block h-3 w-full shrink-0" fill="none" stroke="#8a8886">
        <path d="M0 11.500h103l10-10 10 10h103" />
      </svg>
      <SearchBox label="Search format options" className="mt-[11px] mr-2.5 ml-2.5 shrink-0" />
      <div className="relative mt-[14px] flex flex-col">
        <Section title="Page information" />
        <Section title="Canvas settings" open />
        <div className="bg-[#e1dfdd] px-2.5 pt-2.5 pb-2">
          <div className="rounded-md bg-[#f3f2f1] px-2.5 pt-[10px] pb-px shadow-sm">
            <SelectField label="Type" value="Custom" />
            <NumberField label="Height" />
            <NumberField label="Width" />
            <SelectField label="Vertical alignment" value="Top" />
          </div>
          <button className="flex h-[41px] items-center gap-2 pt-1.5 pl-0.5 text-[14px] text-[#252423]">
            <svg viewBox="0 0 16 16" className="size-4" fill="none" stroke="#117865" strokeWidth="1.200">
              <path d="M1 4h8a5.500 5.500 0 1 1-6 7M4 1L1 4l3 3" />
            </svg>
            Reset to default
          </button>
        </div>
        <Section title="Canvas background" />
        <Section title="Wallpaper" />
        <Section title="Filter pane" open />
        <div className="h-2.5 bg-[#dddbda]" />
        <span className="absolute top-0 right-0 h-[285px] w-[7px] rounded-t bg-[#b8b4b1]/60" />
      </div>
    </aside>
  );
}

function CalcIcon() {
  return (
    <svg viewBox="0 0 16 18" className="h-[18px] w-4 shrink-0" fill="none" stroke="#484644" strokeWidth="1.300">
      <rect x="1" y="1" width="14" height="16" rx="2" />
      <rect x="3.500" y="3.500" width="9" height="3" />
      <path d="M3.500 9.500h9M3.500 12h9M3.500 14.500h9" strokeWidth="1.600" strokeDasharray="2 1.500" />
    </svg>
  );
}

function GridIcon({ calc }: { calc?: boolean }) {
  return (
    <svg viewBox="0 0 18 18" className="size-[18px] shrink-0" fill="none" stroke="#484644" strokeWidth="1.400">
      <rect x="1" y="1.500" width="14" height="14" rx="2" />
      <path d="M1 6h14M1 11h14M5.500 1.500v14M10.500 1.500v14" />
      {calc && (
        <g>
          <rect x="9" y="7" width="8.500" height="10.500" fill="#484644" stroke="#f3f2f1" strokeWidth="1" />
          <path d="M11 13h5M11 15.500h5M11 10h5" stroke="#f3f2f1" strokeWidth="1" strokeDasharray="1.500 1" />
        </g>
      )}
    </svg>
  );
}

function TableNode({ name, open, calc }: { name: string; open?: boolean; calc?: boolean }) {
  return (
    <button className="flex h-[30px] w-full shrink-0 items-center pl-2 text-[14px] text-[#484644]">
      <Chevron dir={open ? "down" : "right"} className="size-4" width={1.2} />
      <span className="ml-1 flex w-[23px]"><GridIcon calc={calc} /></span>
      {name}
    </button>
  );
}

function FieldNode({ name, calc }: { name: string; calc?: boolean }) {
  return (
    <label className="flex h-[30px] shrink-0 items-center pl-12 text-[14px] text-[#484644]">
      <input type="checkbox" className="size-[15px] shrink-0 appearance-none rounded-sm border border-[#8a8886]" />
      <span className="mr-[7px] ml-[9px] w-4 shrink-0">{calc && <CalcIcon />}</span>
      <span className="w-[114px] truncate">{name}</span>
    </label>
  );
}

function DataPane() {
  return (
    <aside className="flex w-[225px] shrink-0 flex-col bg-[#f3f2f1]">
      <PaneHeader title="Data" />
      <SearchBox label="Search data" className="mt-[9px] mr-[5px] ml-[5px]" />
      <div className="relative mt-2.5 flex-1 overflow-hidden">
        <div className="-mt-[11px] flex flex-col">
          {measures.map((m) => <FieldNode key={m} name={m} calc />)}
          <TableNode name="Chart Labels" />
          <TableNode name="dim_customers" open />
          {["city", "customer_id", "customer_name"].map((m) => <FieldNode key={m} name={m} />)}
          <TableNode name="dim_date" />
          <TableNode name="dim_products" />
          <TableNode name="dim_targets_orders" />
          <TableNode name="fact_order_lines" />
          <TableNode name="Product_Customer" calc />
        </div>
        <span className="absolute right-[5px] bottom-2.5 h-[452px] w-2.5 bg-[#c8c8c8]" />
      </div>
    </aside>
  );
}

function StatusBar() {
  return (
    <footer className="flex h-[29px] shrink-0 items-center border-t border-[#d8d6d4] bg-[#f3f2f1] pr-[22px] pl-[5px] text-[14px] text-[#484644]">
      <span className="mt-0.5">Page 2 of 2</span>
      <div className="ml-auto flex items-center">
        <button aria-label="Zoom out" className="mr-2 h-0.5 w-1.5 bg-[#605e5c]" />
        <input aria-label="Zoom" type="range" defaultValue={18} className="h-4 w-[125px] appearance-none bg-[linear-gradient(#605e5c,#605e5c),linear-gradient(#605e5c,#605e5c)] bg-[length:100%_1px,1px_7px] bg-center bg-no-repeat [&::-webkit-slider-thumb]:h-[13px] [&::-webkit-slider-thumb]:w-[5px] [&::-webkit-slider-thumb]:appearance-none [&::-webkit-slider-thumb]:bg-[#605e5c]" />
        <button aria-label="Zoom in" className="ml-[5px]"><Plus className="size-3.5" strokeWidth={3} /></button>
        <span className="mr-6 ml-[15px] text-[14px]">47%</span>
        <button aria-label="Fit to page">
          <svg viewBox="0 0 21 16" className="h-4 w-[21px]" fill="none" stroke="#56707c" strokeWidth="1.600">
            <path d="M1 1h19v14H1zM4 6V4h3M14 4h3v2M4 10v2h3M14 12h3v-2" />
          </svg>
        </button>
      </div>
    </footer>
  );
}

/* ---------- taskbar ---------- */

function Chrome() {
  return (
    <svg viewBox="0 0 30 30" className="size-[30px]">
      <circle cx="15" cy="15" r="15" fill="#fbc116" />
      <path d="M15 15L2 7.500A15 15 0 0 1 28 7.500z" fill="#e33b2e" />
      <path d="M15 15L2 7.500A15 15 0 0 0 13.500 30L20 18z" fill="#229a4b" />
      <circle cx="15" cy="15" r="8" fill="#fff" />
      <circle cx="15" cy="15" r="6" fill="#2f7de9" />
    </svg>
  );
}

function AppButton({ label, dot, active, children }: { label: string; dot?: boolean; active?: boolean; children: React.ReactNode }) {
  return (
    <button
      aria-label={label}
      className={
        active
          ? "relative mx-[3px] flex h-[49px] w-[49px] items-center justify-center rounded-md border border-[#3c413f] bg-[#303533]"
          : "relative mx-[3px] flex h-[49px] w-[49px] items-center justify-center"
      }
    >
      {children}
      {dot && <span className="absolute bottom-0.5 left-1/2 h-1 w-2 -translate-x-1/2 rounded-full bg-[#9a9d9b]" />}
      {active && <span className="absolute bottom-0 left-1/2 h-1 w-5 -translate-x-1/2 rounded-full bg-[#9cc9dc]" />}
    </button>
  );
}

function Taskbar() {
  return (
    <footer className="flex h-[61px] shrink-0 items-center border-t-2 border-black bg-[#1e2321] text-white">
      <div className="flex flex-1 items-center">
        <button className="ml-6 flex items-center gap-1.5 text-left text-[14px] leading-[20px]">
          <svg viewBox="0 0 34 38" className="h-[38px] w-[34px]">
            <path d="M14 5c-2 7-6 11-13 12 3 6 12 8 17 3z" fill="#f59a1b" />
            <path d="M7 36a7 7 0 0 1-1-13 9 9 0 0 1 17-1 7.500 7.500 0 0 1 2 14z" fill="#a9c9f2" />
            <path d="M7 36a7 7 0 0 1-6-8h29a7 7 0 0 1-5 8z" fill="#88aee6" />
            <circle cx="24" cy="10" r="10" fill="#ff9a9f" />
            <text x="24" y="14" fontSize="12" textAnchor="middle" fill="#252423">1</text>
          </svg>
          <span>
            <span className="block">3°C</span>
            <span className="block text-[#d0d2d1]">Mostly cloudy</span>
          </span>
        </button>
      </div>
      <div className="flex shrink-0 items-center pl-3">
        <button aria-label="Start">
          <svg viewBox="0 0 29 29" className="size-[29px]">
            <path d="M0 0h14v14H0zM15 0h14v14H15z" fill="#4fc8fb" />
            <path d="M0 15h14v14H0zM15 15h14v14H15z" fill="#1ba5f5" />
          </svg>
        </button>
        <label className="ml-[17px] flex h-10 w-[274px] items-center overflow-hidden rounded-full border border-[#535856] bg-[#3a3f3d] pr-1 pl-3.5">
          <svg viewBox="0 0 20 20" className="size-5 shrink-0" fill="none" stroke="#fff" strokeWidth="1.800">
            <circle cx="8.500" cy="8.500" r="6.500" /><path d="M13.500 13.500L19 19" />
          </svg>
          <input aria-label="Search Windows" placeholder="Search" className="ml-3 w-full min-w-0 bg-transparent text-[16px] outline-none placeholder:text-[#d0d2d1]" />
          <svg viewBox="0 0 58 34" className="h-[34px] w-[58px] shrink-0">
            <path d="M20 22c6-2 10-8 18-8s14 6 19 8c0 8-4 12-8 12H20z" fill="#a08a1e" />
            <path d="M2 26c10-5 30-7 50 0l2 8H4z" fill="#6f9a2c" />
            {[4, 10, 16, 22, 28, 34, 40, 46, 50].map((x, i) => (
              <path key={x} d={`M${x} ${22 + (i % 3) * 3}l2 2 2-2v5h-4zM${x + 2} ${27 + (i % 2) * 2}l2 2 2-2v4h-4z`} fill="#fbb91b" />
            ))}
            <path d="M1 10l11-1 12-7 2-1 2 1-2 3-8 6 3 6-3 1-5-4-7 2-5-2 5-2z" fill="#cfc3e6" />
            <path d="M6 1l9 7-3 1z" fill="#9d8fc4" />
          </svg>
        </label>
        <div className="ml-[3px] flex items-center">
          <AppButton label="Task view">
            <svg viewBox="0 0 30 28" className="h-7 w-[30px]">
              <rect x="7" y="0" width="23" height="20" rx="2" fill="#f0f0f0" />
              <rect x="0" y="7" width="22" height="20" rx="2" fill="#8a8d8c" fillOpacity="0.850" />
            </svg>
          </AppButton>
          <AppButton label="Chat">
            <svg viewBox="0 0 30 30" className="size-[30px]">
              <path d="M15 1a14 14 0 1 1-7 26l-6 2V15A14 14 0 0 1 15 1z" fill="#6563cf" />
              <rect x="7" y="10" width="11" height="10" rx="2" fill="#fff" /><path d="M19 14l5-3v8l-5-3z" fill="#fff" />
            </svg>
          </AppButton>
          <AppButton label="File Explorer" dot>
            <svg viewBox="0 0 30 28" className="h-7 w-[30px]">
              <path d="M0 2a2 2 0 0 1 2-2h9l3 4h14a2 2 0 0 1 2 2v8H0z" fill="#e0a21a" />
              <rect y="6" width="30" height="21" rx="2" fill="#fccc3c" />
              <path d="M5 28v-6a3 3 0 0 1 3-3h14a3 3 0 0 1 3 3v6z" fill="#157fc9" />
              <path d="M9 23h12" stroke="#0a5ea3" strokeWidth="2" />
            </svg>
          </AppButton>
          <AppButton label="Edge">
            <svg viewBox="0 0 30 30" className="size-[30px]">
              <circle cx="15" cy="15" r="15" fill="#1a7fd4" />
              <path d="M1 12C3 4 9 0 15 0c9 0 15 6 15 13 0 5-4 8-8 8-3 0-5-1-4-3 2-3 0-8-6-8-5 0-9 1-11 5z" fill="#2fb5dd" />
              <path d="M20 1c6 2 10 7 10 12 0 5-4 8-8 8-3 0-5-1-4-3 2-2 1-6-1-7z" fill="#55d77a" />
              <path d="M12 12c-4 4-3 13 6 15 4 1 7 0 9-2-3 4-7 5-12 5C6 29 2 21 6 15c2-2 4-3 6-3z" fill="#0e5aa5" />
              <path d="M15 13c-3 3 0 9 7 9 3 0 5-1 6-1-2 2-5 3-8 3-7-1-9-7-5-11z" fill="#1e2321" />
            </svg>
          </AppButton>
          <AppButton label="Store">
            <svg viewBox="0 0 30 30" className="size-[30px]">
              <path d="M9 7V2h12v5" fill="none" stroke="#35b5f0" strokeWidth="2" />
              <path d="M1 6h28v21a3 3 0 0 1-3 3H4a3 3 0 0 1-3-3z" fill="#f7f7f7" />
              <path d="M9 11h5.500v5.500H9z" fill="#f25022" /><path d="M15.500 11H21v5.500h-5.500z" fill="#7fba00" />
              <path d="M9 17.500h5.500V23H9z" fill="#00a4ef" /><path d="M15.500 17.500H21V23h-5.500z" fill="#ffb900" />
            </svg>
          </AppButton>
          <AppButton label="MyASUS">
            <svg viewBox="0 0 30 30" className="size-[30px]">
              <defs><linearGradient id="asus" x1="0" y1="1" x2="1" y2="0"><stop offset="0" stopColor="#5a1ff0" /><stop offset="1" stopColor="#0aa0ff" /></linearGradient></defs>
              <rect width="30" height="30" fill="url(#asus)" />
              <path d="M4 22l6-13h3L7 22zM11 22l7-14h3l-7 14zM21 8h3v14h-3zM16 19l4-7v7z" fill="#fff" />
            </svg>
          </AppButton>
          <AppButton label="Chrome profile" dot>
            <Chrome />
            <span className="absolute top-0 right-0 flex size-5 items-center justify-center rounded-full bg-[#455a64] text-[11px] leading-none text-[#cfd8dc]">a</span>
          </AppButton>
          <AppButton label="Power BI" active>
            <svg viewBox="0 0 24 30" className="h-[30px] w-6">
              <rect x="14" y="0" width="10" height="30" rx="1" fill="#d9a017" />
              <rect x="7" y="8" width="10" height="22" rx="1" fill="#edc233" />
              <rect x="0" y="15" width="10" height="15" rx="1" fill="#f8dd66" />
            </svg>
          </AppButton>
          <AppButton label="Chrome" dot><Chrome /></AppButton>
        </div>
      </div>
      <div className="flex flex-1 items-center justify-end">
        <ChevronUp className="mr-5 size-[18px]" />
        <svg viewBox="0 0 22 16" className="mr-[19px] h-4 w-[22px]">
          <path d="M5 15A4.500 4.500 0 0 1 4 6.500 6 6 0 0 1 15 4a5.500 5.500 0 0 1 3 11z" fill="#9a9d9b" />
          <path d="M4 15a4 4 0 0 1-1-7.500c4-2 7 0 9 2 3-3 8-2 9 2 0 2-1 3.500-3 3.500z" fill="#f0f0f0" />
        </svg>
        <Wifi className="mr-[9px] size-5" />
        <Volume2 className="mr-[10px] size-5" strokeWidth={1.6} />
        <svg viewBox="0 0 21 18" className="mr-[9px] h-[18px] w-[21px]" fill="none" stroke="#fff" strokeWidth="1.600">
          <path d="M7 3h9a2 2 0 0 1 2 2v9a2 2 0 0 1-2 2H4a2 2 0 0 1-2-2V9" />
          <path d="M8 7h7v6H5v-3z" fill="#fff" /><path d="M19.500 7v5" /><path d="M5 0L1 6h4l-1 4" strokeWidth="1.300" />
        </svg>
        <span className="mr-2 w-[90px] text-right text-[14px] leading-[20px]">
          <span className="block">22:35</span>
          <span className="block">22/02/2024</span>
        </span>
        <Bell className="mr-[19px] size-[20px]" strokeWidth={1.6} />
        <svg viewBox="0 0 32 32" className="mr-6 size-8">
          <path d="M12 1h7l3 6-7 14H7c-5 0-6-4-4-9z" fill="#2a9fe6" />
          <path d="M12 1c-4 2-5 9-9 11-2 5 0 9 4 9 3 0 5-5 6-9z" fill="#47c27b" />
          <path d="M19 8h7c4 0 4 4 3 8l-3 8h-7l-4-3z" fill="#e05ab0" />
          <path d="M19 8c3 1 0 9-2 14l-4 1 3-12z" fill="#8b5bea" />
          <rect x="6" y="20" width="25" height="11" rx="2" fill="#fcc419" />
          <text x="18.500" y="29" fontSize="9" fontWeight="700" textAnchor="middle" fill="#252423">PRE</text>
        </svg>
      </div>
    </footer>
  );
}

export default function App() {
  return (
    <div className="flex h-screen flex-col overflow-hidden bg-[#f3f2f1] font-['Open_Sans','Noto_Sans',sans-serif]">
      <TitleBar />
      <MenuBar />
      <Ribbon />
      <div className="flex min-h-0 flex-1">
        <LeftRail />
        <div className="flex min-w-0 flex-1 flex-col">
          <Report />
          <PageTabs />
        </div>
        <VisualizationsPane />
        <DataPane />
      </div>
      <StatusBar />
      <Taskbar />
    </div>
  );
}
